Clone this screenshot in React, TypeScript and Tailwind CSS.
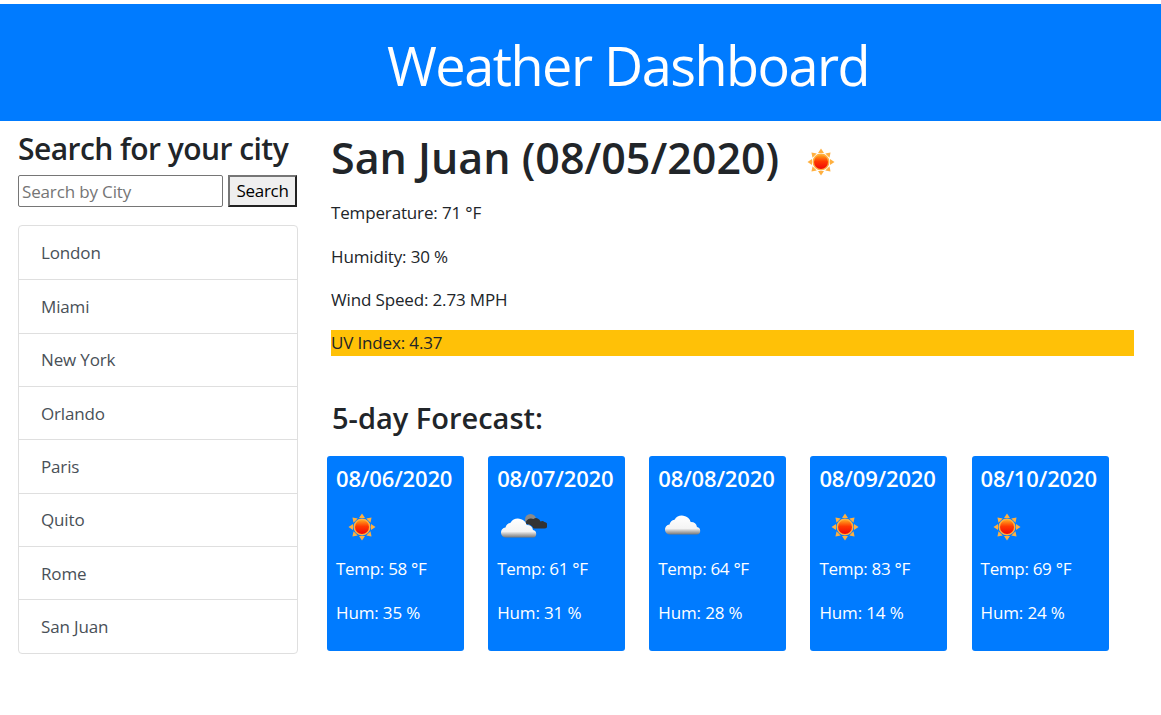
import React from 'react';

const cities = ['London', 'Miami', 'New York', 'Orlando', 'Paris', 'Quito', 'Rome', 'San Juan'];

const forecast = [
  { date: '08/06/2020', icon: 'sun', temp: 58, hum: 35 },
  { date: '08/07/2020', icon: 'dark', temp: 61, hum: 31 },
  { date: '08/08/2020', icon: 'cloud', temp: 64, hum: 28 },
  { date: '08/09/2020', icon: 'sun', temp: 83, hum: 14 },
  { date: '08/10/2020', icon: 'sun', temp: 69, hum: 24 },
];

function SunIcon() {
  const rays = [0, 45, 90, 135, 180, 225, 270, 315];
  return (
    <svg width="50" height="50" viewBox="-1 0 50 50">
      <defs>
        <linearGradient id="sunFill" x1="0" y1="0" x2="0" y2="1">
          <stop offset="0" stopColor="#ffa51f" />
          <stop offset="0.45" stopColor="#ff3a00" />
          <stop offset="1" stopColor="#f00808" />
        </linearGradient>
      </defs>
      {rays.map(r => (
        <polygon key={r} points="22,16 28,16 25,11.5" fill="#ffb040" transform={`rotate(${r} 25 25)`} />
      ))}
      <circle cx="25" cy="25" r="8.5" fill="#ffb040" />
      <circle cx="25" cy="25" r="7" fill="url(#sunFill)" />
    </svg>
  );
}

function CloudIcon({ dark }: { dark?: boolean }) {
  return (
    <svg width="50" height="50" viewBox={dark ? '-3.5 0 50 50' : '-6.5 3 50 50'}>
      <defs>
        <linearGradient id="cloudFill" x1="0" y1="0" x2="0" y2="1">
          <stop offset="0" stopColor="#ffffff" />
          <stop offset="0.68" stopColor="#f4f4f4" />
          <stop offset="0.85" stopColor="#b0b0b0" />
          <stop offset="1" stopColor="#777777" />
        </linearGradient>
      </defs>
      {dark && (
        <g>
          <circle cx="30" cy="17.5" r="5.5" fill="#8a8a8a" />
          <path d="M25 22a5.5 5.5 0 0 1 8-5a4.5 4.5 0 0 1 7 2.5a3.6 3.6 0 0 1 4 .5a3.6 3.6 0 0 1 3 3.3a3.2 3.2 0 0 1-3.2 3.2H33a8 8 0 0 0-8-4.5z" fill="#333333" />
        </g>
      )}
      <path
        d="M6 35.5a5 5 0 0 1-1-10a6.5 6.5 0 0 1 5-4.8a9 9 0 0 1 16.2 2.3a6.2 6.2 0 0 1 6.3 5a3.8 3.8 0 0 1 3.2 3.7a3.7 3.7 0 0 1-3.7 3.8z"
        fill="url(#cloudFill)"
      />
    </svg>
  );
}

function WeatherIcon({ name }: { name: string }) {
  if (name === 'sun') return <SunIcon />;
  if (name === 'dark') return <CloudIcon dark />;
  return <CloudIcon />;
}

function App() {
  return (
    <div className="min-h-[715px] bg-white pt-1 text-[#212529] font-['Open_Sans','Noto_Sans',sans-serif] text-[17px] tracking-[-0.15px]">
      <header className="h-[117px] bg-[#007bff] pl-[387px] pt-[28px] text-white">
        <h1 className="text-[54px] leading-[66px] tracking-[-1.5px]">Weather Dashboard</h1>
      </header>

      <div className="flex">
        <aside className="ml-[18px] w-[280px]">
          <h2 className="mt-[8px] text-[30px] leading-[39px] font-semibold tracking-[-0.55px] whitespace-nowrap">Search for your city</h2>
          <div className="mt-[7px] flex gap-[5px]">
            <input
              placeholder="Search by City"
              className="h-[32px] w-[205px] rounded-[2px] border border-[#767676] px-[3px] text-[17px] tracking-[-0.15px] placeholder:text-[#757575]"
            />
            <button className="h-[32px] w-[69px] border-2 border-t-[#767676] border-l-[#767676] border-r-[#222] border-b-[#222] bg-[#efefef] text-[17px] tracking-[-0.3px] text-black">
              Search
            </button>
          </div>
          <ul className="mt-[18px] rounded border border-[#dfdfdf]">
            {cities.map((c, i) => (
              <li
                key={c}
                className={`flex h-[53.35px] items-center pt-[0.5px] pl-[22px] text-[#495057] ${i > 0 ? 'border-t border-[#dfdfdf]' : ''}`}
              >
                {c}
              </li>
            ))}
          </ul>
        </aside>

        <main className="ml-[29px] w-[807px]">
          <div className="ml-[4px] flex items-start">
            <h2 className="mt-[10px] text-[43px] leading-[54px] font-semibold tracking-normal whitespace-nowrap">San Juan (08/05/2020)</h2>
            <span className="mt-[16px] ml-[16px]">
              <SunIcon />
            </span>
          </div>
          <div className="ml-[4px]">
            <p className="mt-[14px] h-[24px] leading-[24px]">Temperature: 71 °F</p>
            <p className="mt-[20px] h-[24px] leading-[24px]">Humidity: 30 %</p>
            <p className="mt-[19px] h-[24px] leading-[24px]">Wind Speed: 2.73 MPH</p>
            <p className="mt-[18px] h-[26px] bg-[#ffc107] leading-[26px]">UV Index: 4.37</p>
          </div>
          <h3 className="mt-[44px] ml-[5px] text-[29px] leading-[36px] font-semibold tracking-normal">5-day Forecast:</h3>
          <div className="mt-[20px] flex gap-[24.15px]">
            {forecast.map(f => (
              <div key={f.date} className="h-[195px] w-[137px] rounded-[3px] bg-[#007bff] px-[9px] pt-[8px] text-white">
                <div className="text-[22px] leading-[28px] font-semibold tracking-[-0.15px] whitespace-nowrap">{f.date}</div>
                <div className="mt-[10px] h-[50px]">
                  <WeatherIcon name={f.icon} />
                </div>
                <p className="mt-[5px] h-[24px] leading-[24px] tracking-[-0.3px]">Temp: {f.temp} °F</p>
                <p className="mt-[20px] h-[24px] leading-[24px]">Hum: {f.hum} %</p>
              </div>
            ))}
          </div>
        </main>
      </div>
    </div>
  );
}

export default App;
